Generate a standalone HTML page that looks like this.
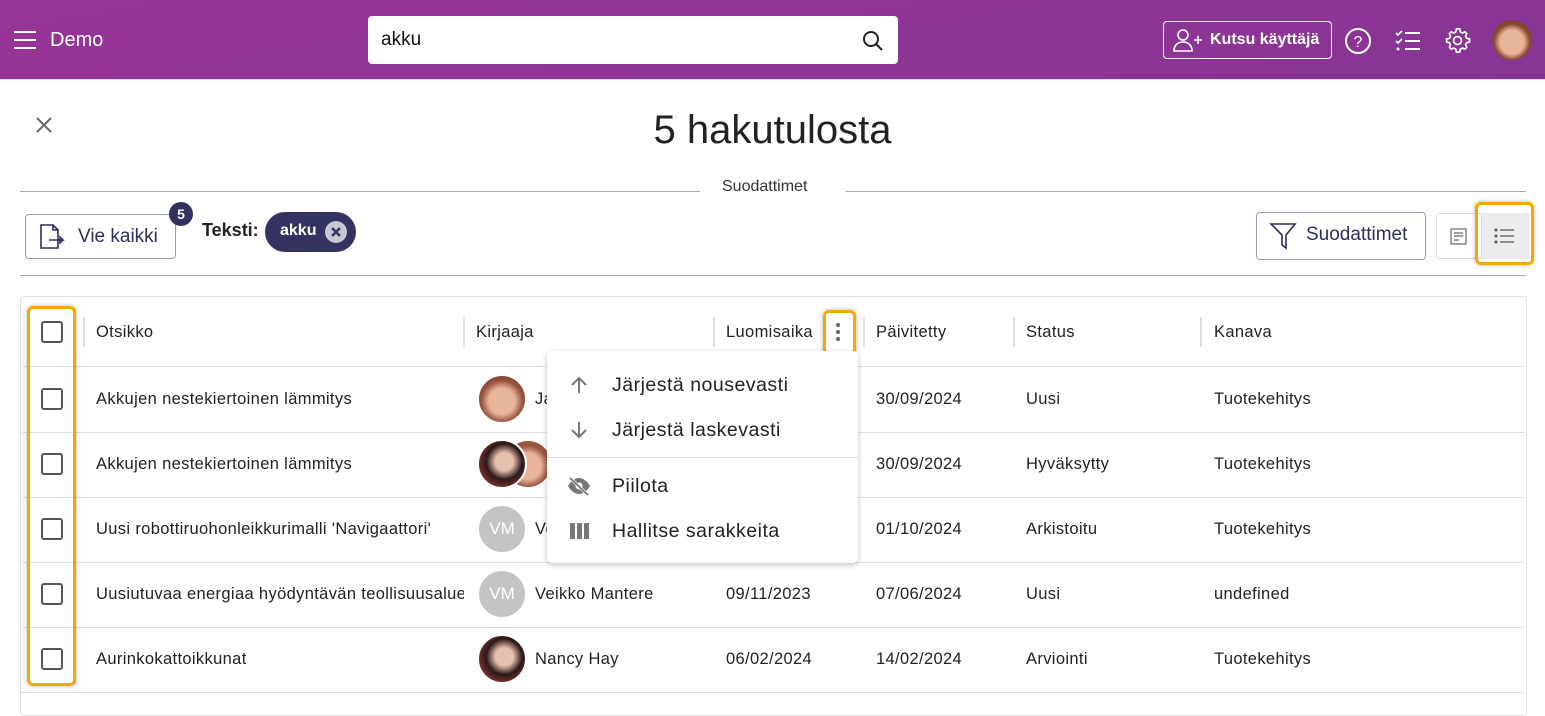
<!DOCTYPE html>
<html><head><meta charset="utf-8"><style>
*{box-sizing:border-box;margin:0;padding:0}
body{width:1545px;height:708px;overflow:hidden;background:#fff;font-family:"Liberation Sans",Roboto,sans-serif;color:#222;position:relative}
.hdr{position:absolute;left:0;top:0;width:1545px;height:80px;background:linear-gradient(170deg,#973497,#873594);border-bottom:1px solid #ddd}
.abs{position:absolute}
.search{left:368px;top:16px;width:530px;height:48px;background:#fff;border-radius:4px}
.line{position:absolute;height:1px;background:#aaa}
.cb{position:absolute;left:41px;width:22px;height:22px;border:2px solid #555;border-radius:3px}
.row{position:absolute;left:21px;width:1504px;height:1px;background:#e2e2e2}
.t{position:absolute;font-size:16.5px;letter-spacing:.35px;color:#222;white-space:nowrap}
.sep{position:absolute;top:317px;width:2px;height:30px;background:#e0e0e0}
.av{position:absolute;width:50px;height:50px;border-radius:50%;border:2px solid #fff}
.vm{background:#c4c4c4;color:#fff;font-size:17px;text-align:center;line-height:46px}
.orange{position:absolute;border:3px solid #f5a800;border-radius:6px;box-shadow:0 0 4px rgba(0,0,0,.3)}
.mi{position:absolute;left:612px;font-size:19.5px;letter-spacing:.5px;color:#222}
</style></head><body>
<div class="hdr"></div>
<svg class="abs" style="left:13px;top:30px" width="24" height="20"><path d="M1 2h22M1 10h22M1 18h22" stroke="#fff" stroke-width="2"/></svg>
<div class="abs" style="left:50px;top:29px;color:#fff;font-size:20px">Demo</div>
<div class="abs search"></div>
<div class="abs" style="left:381px;top:29px;font-size:19px;color:#111">akku</div>
<svg class="abs" style="left:862px;top:30px" width="22" height="22"><circle cx="9" cy="9" r="7" fill="none" stroke="#222" stroke-width="2"/><path d="M14 14l6 6" stroke="#222" stroke-width="2"/></svg>
<div class="abs" style="left:1163px;top:21px;width:169px;height:38px;border:1.5px solid #fff;border-radius:4px"></div>
<svg class="abs" style="left:1172px;top:28px" width="32" height="24"><circle cx="11" cy="7" r="5" fill="none" stroke="#fff" stroke-width="1.6"/><path d="M2 23c0-6 4-9 9-9s9 3 9 9z" fill="none" stroke="#fff" stroke-width="1.6"/><path d="M22 12h8M26 8v8" stroke="#fff" stroke-width="1.6"/></svg>
<div class="abs" style="left:1210px;top:31px;color:#fff;font-size:16px;font-weight:bold">Kutsu käyttäjä</div>
<svg class="abs" style="left:1344px;top:27px" width="28" height="28"><circle cx="14" cy="14" r="12" fill="none" stroke="#fff" stroke-width="2"/><text x="14" y="20" text-anchor="middle" fill="#fff" font-size="16" font-family="Liberation Sans">?</text></svg>
<svg class="abs" style="left:1395px;top:29px" width="26" height="24"><path d="M1 4l2 2 4-4M1 12l2 2 4-4" stroke="#fff" stroke-width="1.6" fill="none"/><circle cx="3" cy="20" r="1.5" fill="#fff"/><path d="M10 4h15M10 12h15M10 20h15" stroke="#fff" stroke-width="2"/></svg>
<svg class="abs" style="left:1444px;top:27px" width="27" height="27" viewBox="0 0 24 24"><path d="M12 1.5l2 .3.5 2.5 1.8 1 2.4-1 1.5 1.6-1 2.4 1 1.8 2.5.5v2.8l-2.5.5-1 1.8 1 2.4-1.5 1.6-2.4-1-1.8 1-.5 2.5h-3l-.5-2.5-1.8-1-2.4 1-1.5-1.6 1-2.4-1-1.8-2.5-.5v-2.8l2.5-.5 1-1.8-1-2.4 1.5-1.6 2.4 1 1.8-1 .5-2.5z" fill="none" stroke="#fff" stroke-width="1.5"/><circle cx="12" cy="12" r="3.5" fill="none" stroke="#fff" stroke-width="1.5"/></svg>
<div class="abs" style="left:1492px;top:20px;width:40px;height:40px;border-radius:50%;background:radial-gradient(circle at 50% 55%,#e8b59a 0 40%,#8a4a33 60%,#5a3020)"></div>

<svg class="abs" style="left:35px;top:116px" width="18" height="18"><path d="M2 2l14 14M16 2L2 16" stroke="#666" stroke-width="2"/></svg>
<div class="abs" style="left:0;width:1545px;top:108px;text-align:center;font-size:40px;color:#222">5 hakutulosta</div>
<div class="line" style="left:20px;top:191px;width:680px"></div>
<div class="line" style="left:846px;top:191px;width:680px"></div>
<div class="abs" style="left:722px;top:178px;font-size:16px;color:#333">Suodattimet</div>

<div class="abs" style="left:25px;top:214px;width:151px;height:45px;border:1px solid #9a98b8;border-radius:4px"></div>
<svg class="abs" style="left:39px;top:224px" width="30" height="26"><path d="M2 1h12l5 5v18H2z M14 1v5h5" fill="none" stroke="#2f2d5e" stroke-width="1.6"/><path d="M10 16h14l-3-3v6l3-3" fill="none" stroke="#2f2d5e" stroke-width="1.5"/></svg>
<div class="abs" style="left:78px;top:226px;font-size:19px;color:#2f2d5e">Vie kaikki</div>
<div class="abs" style="left:169px;top:202px;width:24px;height:24px;border-radius:50%;background:#34325f;color:#fff;font-size:14px;font-weight:bold;text-align:center;line-height:24px">5</div>
<div class="abs" style="left:202px;top:220px;font-size:18px;font-weight:bold;color:#222">Teksti:</div>
<div class="abs" style="left:265px;top:212px;width:91px;height:40px;border-radius:20px;background:#34325f"></div>
<div class="abs" style="left:280px;top:222px;font-size:16px;font-weight:bold;color:#fff">akku</div>
<div class="abs" style="left:325px;top:221px;width:22px;height:22px;border-radius:50%;background:#c9c8d6"></div>
<svg class="abs" style="left:325px;top:221px" width="22" height="22"><path d="M7 7l8 8M15 7l-8 8" stroke="#34325f" stroke-width="2.5"/></svg>

<div class="abs" style="left:1256px;top:212px;width:170px;height:48px;border:1px solid #9a98b8;border-radius:4px"></div>
<svg class="abs" style="left:1269px;top:222px" width="28" height="28"><path d="M2 2h24l-9 11v13l-4-3V13z" fill="none" stroke="#2f2d5e" stroke-width="1.6"/></svg>
<div class="abs" style="left:1306px;top:224px;font-size:19px;color:#2f2d5e">Suodattimet</div>
<div class="abs" style="left:1436px;top:213px;width:94px;height:46px;border:1px solid #ddd;border-radius:4px"></div>
<div class="abs" style="left:1481px;top:213px;width:49px;height:46px;background:#ececec;border-left:1px solid #ddd"></div>
<svg class="abs" style="left:1450px;top:228px" width="18" height="18"><rect x="1" y="1" width="15" height="15" fill="none" stroke="#666" stroke-width="1.2"/><path d="M4 5h9M4 8h9M4 12h5" stroke="#666" stroke-width="1.2"/></svg>
<svg class="abs" style="left:1494px;top:227px" width="22" height="18"><circle cx="2" cy="3" r="1.5" fill="#555"/><circle cx="2" cy="9" r="1.5" fill="#555"/><circle cx="2" cy="15" r="1.5" fill="#555"/><path d="M6 3h14M6 9h14M6 15h14" stroke="#555" stroke-width="1.3"/></svg>
<div class="orange" style="left:1475px;top:202px;width:59px;height:63px"></div>
<div class="line" style="left:20px;top:275px;width:1506px"></div>

<div class="abs" style="left:20px;top:296px;width:1507px;height:420px;border:1px solid #e0e0e0;border-radius:4px"></div>
<div class="sep" style="left:83px"></div><div class="sep" style="left:463px"></div><div class="sep" style="left:713px"></div><div class="sep" style="left:863px"></div><div class="sep" style="left:1013px"></div><div class="sep" style="left:1200px"></div>
<div class="cb" style="top:321px"></div>
<div class="t" style="left:96px;top:323px">Otsikko</div>
<div class="t" style="left:476px;top:323px">Kirjaaja</div>
<div class="t" style="left:726px;top:323px">Luomisaika</div>
<div class="t" style="left:876px;top:323px">Päivitetty</div>
<div class="t" style="left:1026px;top:323px">Status</div>
<div class="t" style="left:1214px;top:323px">Kanava</div>
<svg class="abs" style="left:834px;top:322px" width="8" height="20"><circle cx="4" cy="3" r="2" fill="#666"/><circle cx="4" cy="10" r="2" fill="#666"/><circle cx="4" cy="17" r="2" fill="#666"/></svg>
<div class="orange" style="left:823px;top:310px;width:33px;height:45px"></div>

<div class="row" style="top:366px"></div><div class="row" style="top:432px"></div><div class="row" style="top:497px"></div><div class="row" style="top:562px"></div><div class="row" style="top:627px"></div><div class="row" style="top:692px"></div>

<div class="cb" style="top:388px"></div><div class="cb" style="top:453px"></div><div class="cb" style="top:518px"></div><div class="cb" style="top:583px"></div><div class="cb" style="top:648px"></div>
<div class="orange" style="left:27px;top:306px;width:49px;height:380px"></div>

<div class="t" style="left:96px;top:390px">Akkujen nestekiertoinen lämmitys</div>
<div class="t" style="left:96px;top:455px">Akkujen nestekiertoinen lämmitys</div>
<div class="t" style="left:96px;top:520px">Uusi robottiruohonleikkurimalli 'Navigaattori'</div>
<div class="t" style="left:96px;top:585px;width:368px;overflow:hidden">Uusiutuvaa energiaa hyödyntävän teollisuusaluee</div>
<div class="t" style="left:96px;top:650px">Aurinkokattoikkunat</div>

<div class="av" style="left:477px;top:374px;background:radial-gradient(circle at 50% 55%,#e8b59a 0 38%,#9a5540 60%,#5a3020)"></div>
<div class="t" style="left:535px;top:390px">Ja</div>
<div class="av" style="left:503px;top:439px;background:radial-gradient(circle at 50% 55%,#e8b59a 0 38%,#9a5540 60%)"></div>
<div class="av" style="left:477px;top:439px;background:radial-gradient(circle at 55% 45%,#e8c0b0 0 25%,#2a1a18 50%,#b04040 90%)"></div>
<div class="av vm" style="left:477px;top:504px">VM</div><div class="t" style="left:535px;top:520px">Ve</div>
<div class="av vm" style="left:477px;top:569px">VM</div><div class="t" style="left:535px;top:585px">Veikko Mantere</div>
<div class="av" style="left:477px;top:634px;background:radial-gradient(circle at 55% 45%,#e8c0b0 0 25%,#2a1a18 50%,#b04040 90%)"></div><div class="t" style="left:535px;top:650px">Nancy Hay</div>

<div class="t" style="left:726px;top:585px">09/11/2023</div>
<div class="t" style="left:726px;top:650px">06/02/2024</div>
<div class="t" style="left:876px;top:390px">30/09/2024</div><div class="t" style="left:1026px;top:390px">Uusi</div><div class="t" style="left:1214px;top:390px">Tuotekehitys</div>
<div class="t" style="left:876px;top:455px">30/09/2024</div><div class="t" style="left:1026px;top:455px">Hyväksytty</div><div class="t" style="left:1214px;top:455px">Tuotekehitys</div>
<div class="t" style="left:876px;top:520px">01/10/2024</div><div class="t" style="left:1026px;top:520px">Arkistoitu</div><div class="t" style="left:1214px;top:520px">Tuotekehitys</div>
<div class="t" style="left:876px;top:585px">07/06/2024</div><div class="t" style="left:1026px;top:585px">Uusi</div><div class="t" style="left:1214px;top:585px">undefined</div>
<div class="t" style="left:876px;top:650px">14/02/2024</div><div class="t" style="left:1026px;top:650px">Arviointi</div><div class="t" style="left:1214px;top:650px">Tuotekehitys</div>

<div class="abs" style="left:547px;top:351px;width:311px;height:212px;background:#fff;border-radius:5px;box-shadow:0 2px 6px rgba(0,0,0,.25)"></div>
<div class="abs" style="left:547px;top:457px;width:311px;height:1px;background:#ddd"></div>
<svg class="abs" style="left:569px;top:375px" width="20" height="20"><path d="M10 18V3M3 10l7-7 7 7" fill="none" stroke="#777" stroke-width="2"/></svg>
<svg class="abs" style="left:569px;top:420px" width="20" height="20"><path d="M10 2v15M3 10l7 7 7-7" fill="none" stroke="#777" stroke-width="2"/></svg>
<svg class="abs" style="left:567px;top:476px" width="24" height="20"><path d="M1 10c3-5 7-8 11-8s8 3 11 8c-3 5-7 8-11 8S4 15 1 10z" fill="#777"/><circle cx="12" cy="10" r="3.5" fill="#fff"/><path d="M3 2l18 17" stroke="#fff" stroke-width="3"/><path d="M3 2l18 17" stroke="#777" stroke-width="1.8"/></svg>
<svg class="abs" style="left:570px;top:523px" width="20" height="16"><rect x="0" y="0" width="5" height="16" fill="#777"/><rect x="7" y="0" width="5" height="16" fill="#777"/><rect x="14" y="0" width="5" height="16" fill="#777"/></svg>
<div class="mi" style="top:374px">Järjestä nousevasti</div>
<div class="mi" style="top:419px">Järjestä laskevasti</div>
<div class="mi" style="top:475px">Piilota</div>
<div class="mi" style="top:520px">Hallitse sarakkeita</div>
</body></html>
